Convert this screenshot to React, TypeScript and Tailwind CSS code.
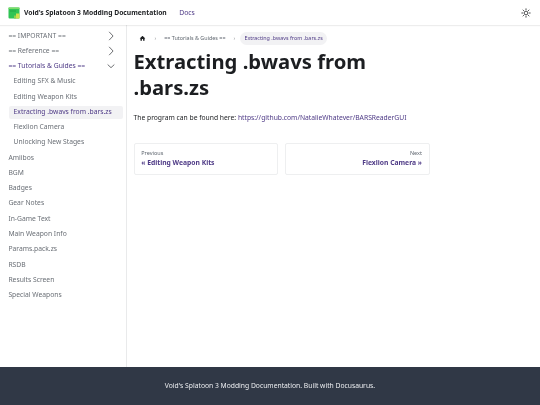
import React from "react";

const purple = "text-[#4e3a86]";

function Chevron({ down = false }: { down?: boolean }) {
  return (
    <svg width="10" height="10" viewBox="0 0 24 24" className="shrink-0 text-[#606266]">
      <path
        d={down ? "M4 8.5 L12 16 L20 8.5" : "M7.5 2 L17 12 L7.5 22"}
        fill="none"
        stroke="currentColor"
        strokeWidth="2.2"
      />
    </svg>
  );
}

function Cat({ label, open = false }: { label: string; open?: boolean }) {
  return (
    <div className={`flex h-[13.5px] items-center justify-between pl-[5px] pr-[10px] text-[6.75px] ${open ? purple : "text-[#6a6f76]"}`}>
      <span>{label}</span>
      <Chevron down={open} />
    </div>
  );
}

function Item({ label, active = false }: { label: string; active?: boolean }) {
  return (
    <div
      className={`flex h-[13.5px] items-center rounded-[2px] pl-[5px] text-[6.75px] leading-none ${
        active ? `bg-[#f2f2f4] ${purple}` : "text-[#6a6f76]"
      }`}
    >
      {label}
    </div>
  );
}

export default function App() {
  return (
    <div className="flex h-[405px] w-[540px] flex-col overflow-hidden bg-white font-['Noto_Sans',sans-serif] text-[#1c1e21] blur-[0.2px]">
      <header className="z-10 flex h-[25.3px] shrink-0 items-center pl-[7.5px] pr-[8px] shadow-[0_1px_1px_rgba(0,0,0,0.07)]">
        <svg width="12" height="12" viewBox="0 0 12 12" className="mr-[4.5px]">
          <rect x="0.5" y="0.5" width="11" height="11" rx="1" fill="#2fc454" />
          <rect x="0.5" y="0.5" width="11" height="1.5" fill="#7fdc6a" />
          <rect x="2" y="3.5" width="6" height="1" fill="#22a544" />
          <rect x="8" y="6.5" width="3.5" height="5" fill="#cfe04a" />
          <rect x="6" y="8.5" width="2" height="3" fill="#8fd04e" />
        </svg>
        <span className="text-[6.75px] font-bold text-[#1c1e21]">Void's Splatoon 3 Modding Documentation</span>
        <span className={`ml-[12.5px] text-[6.75px] ${purple}`}>Docs</span>
        <svg width="10" height="10" viewBox="0 0 24 24" className="ml-auto mr-[1px] text-[#1c1e21]">
          <circle cx="12" cy="12" r="4.5" fill="none" stroke="currentColor" strokeWidth="1.9" />
          <path
            d="M12 1v4M12 19v4M1 12h4M19 12h4M4.2 4.2l2.8 2.8M17 17l2.8 2.8M4.2 19.8L7 17M17 7l2.8-2.8"
            fill="none"
            stroke="currentColor"
            strokeWidth="1.9"
          />
        </svg>
      </header>

      <div className="flex min-h-0 flex-1">
        <aside className="w-[127px] shrink-0 border-r border-[#e9eaeb] pl-[3.4px] pt-[3.9px]">
          <div className="flex flex-col gap-[1.78px]">
            <Cat label="== IMPORTANT ==" />
            <Cat label="== Reference ==" />
            <Cat label="== Tutorials & Guides ==" open />
          </div>
          <div className="ml-[5.2px] mr-[3px] mt-[1.78px] flex flex-col gap-[1.78px]">
            <Item label="Editing SFX & Music" />
            <Item label="Editing Weapon Kits" />
            <Item active label="Extracting .bwavs from .bars.zs" />
            <Item label="Flexlion Camera" />
            <Item label="Unlocking New Stages" />
          </div>
          <div className="mt-[1.78px] flex flex-col gap-[1.78px]">
            {["Amiibos", "BGM", "Badges", "Gear Notes", "In-Game Text", "Main Weapon Info", "Params.pack.zs", "RSDB", "Results Screen", "Special Weapons"].map((s) => (
              <Item key={s} label={s} />
            ))}
          </div>
        </aside>

        <main className="flex-1 pl-[6.5px] pr-[110.3px] pt-[6.7px]">
          <nav className="flex h-[13px] items-center pl-[5px] text-[5.4px] text-[#606770]">
            <svg width="7" height="7" viewBox="0 0 24 24" className="text-[#1c1e21]">
              <path d="M10 19v-5h4v5c0 .55.45 1 1 1h3c.55 0 1-.45 1-1v-7h1.7c.46 0 .68-.57.33-.87L12.67 3.6c-.38-.34-.96-.34-1.34 0l-8.36 7.53c-.34.3-.13.87.33.87H5v7c0 .55.45 1 1 1h3c.55 0 1-.45 1-1z" fill="currentColor" />
            </svg>
            <span className="ml-[9px] mr-[8px] text-[#8a8c90]">›</span>
            <span>== Tutorials & Guides ==</span>
            <span className="ml-[8px] mr-[5px] text-[#8a8c90]">›</span>
            <span className={`flex h-[13px] items-center rounded-full bg-[#f2f2f4] px-[4.2px] ${purple}`}>Extracting .bwavs from .bars.zs</span>
          </nav>
          <h1 className="mt-[4.5px] text-[20.25px] font-bold leading-[25.8px] text-[#1c1e21]">
            Extracting .bwavs from .bars.zs
          </h1>
          <p className="mt-[11px] text-[6.75px] leading-[11.1px] text-[#1c1e21]">
            The program can be found here:{" "}
            <span className={purple}>https://github.com/NatalieWhatever/BARSReaderGUI</span>
          </p>
          <div className="mt-[19.7px] grid grid-cols-2 gap-[6.75px]">
            <div className="flex h-[32px] flex-col justify-center rounded-[2px] border border-[#eeeff0] px-[6.75px]">
              <span className="text-[5.5px] leading-[9px] text-[#606770]">Previous</span>
              <span className={`text-[6.75px] font-bold leading-[10px] ${purple}`}>« Editing Weapon Kits</span>
            </div>
            <div className="flex h-[32px] flex-col justify-center rounded-[2px] border border-[#eeeff0] px-[6.75px] text-right">
              <span className="text-[5.5px] leading-[9px] text-[#606770]">Next</span>
              <span className={`text-[6.75px] font-bold leading-[10px] ${purple}`}>Flexlion Camera »</span>
            </div>
          </div>
        </main>
      </div>

      <footer className="flex h-[38px] shrink-0 items-center justify-center bg-[#303846] text-[6.75px] text-[#ebedf0]">
        Void's Splatoon 3 Modding Documentation. Built with Docusaurus.
      </footer>
    </div>
  );
}
